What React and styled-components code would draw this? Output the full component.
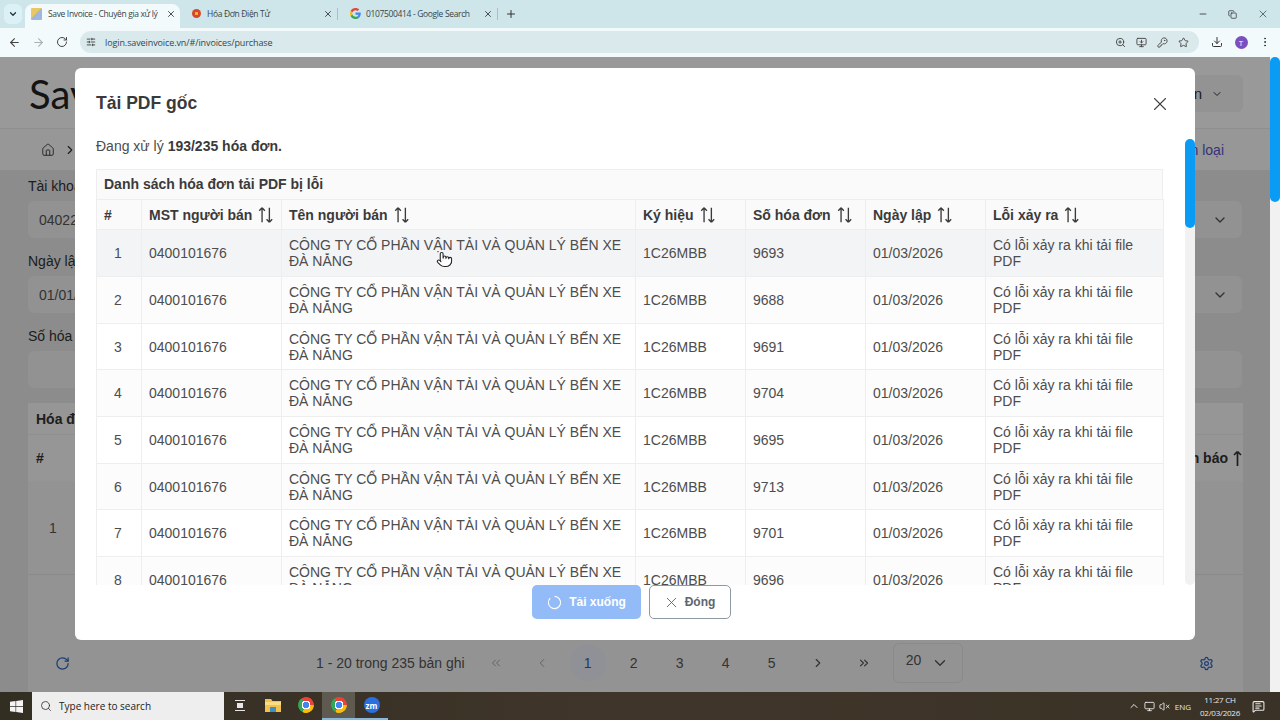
import styled, { createGlobalStyle } from "styled-components";
import {
  ArrowLeft,
  ArrowRight,
  ChevronDown,
  ChevronLeft,
  ChevronRight,
  ChevronsLeft,
  ChevronsRight,
  ChevronUp,
  Download,
  EllipsisVertical,
  Home,
  KeyRound,
  Monitor,
  MonitorDown,
  Plus,
  Pointer,
  RotateCw,
  Search,
  Settings,
  SlidersHorizontal,
  Star,
  VolumeX,
  X,
  ZoomIn,
  MessageSquareText,
  Copy,
  Minus,
} from "lucide-react";

const INVOICE_NUMBERS = [9693, 9688, 9691, 9704, 9695, 9713, 9701, 9696];

const COLUMNS = [
  { label: "#", width: 45 },
  { label: "MST người bán", width: 140, sort: true },
  { label: "Tên người bán", width: 354, sort: true },
  { label: "Ký hiệu", width: 110, sort: true },
  { label: "Số hóa đơn", width: 120, sort: true },
  { label: "Ngày lập", width: 120, sort: true },
  { label: "Lỗi xảy ra", width: 178, sort: true },
];

const GlobalStyle = createGlobalStyle`
  html, body {
    margin: 0;
    padding: 0;
    width: 1280px;
    height: 720px;
    overflow: hidden;
    font-family: "Liberation Sans", Arial, sans-serif;
  }
  * {
    box-sizing: border-box;
  }
`;

function SortIcon() {
  return (
    <SortSvg viewBox="0 0 16 16">
      <path d="M4.500 14.500V1.500M4.500 1.500L2 4.200M4.500 1.500L7 4.200M11 1.500V14.500M11 14.500L8.500 11.800M11 14.500L13.500 11.800" />
    </SortSvg>
  );
}

function GoogleLogo() {
  return (
    <svg width="11" height="11" viewBox="0 0 48 48">
      <path fill="#EA4335" d="M24 9.500c3.500 0 6.700 1.200 9.200 3.600l6.900-6.900C35.900 2.400 30.500 0 24 0 14.600 0 6.500 5.400 2.600 13.200l8 6.200C12.500 13.600 17.800 9.500 24 9.500z" />
      <path fill="#4285F4" d="M46.900 24.500c0-1.600-.1-3.100-.4-4.500H24v9h12.900c-.6 3-2.200 5.500-4.700 7.200l7.700 6c4.500-4.200 7-10.300 7-17.700z" />
      <path fill="#FBBC05" d="M10.500 28.600c-.5-1.400-.8-3-.8-4.600s.3-3.200.8-4.600l-8-6.200C.9 16.400 0 20.100 0 24s.9 7.600 2.600 10.800l7.900-6.200z" />
      <path fill="#34A853" d="M24 48c6.500 0 11.900-2.100 15.900-5.800l-7.700-6c-2.200 1.400-4.900 2.300-8.200 2.300-6.200 0-11.500-4.200-13.400-9.800l-8 6.200C6.500 42.600 14.600 48 24 48z" />
    </svg>
  );
}

function WindowsLogo() {
  return (
    <svg width="13" height="13" viewBox="0 0 16 16" fill="#f4f4f4">
      <path d="M0 2.300 6.800 1.300v6.200H0zM7.600 1.200 16 0v7.500H7.600zM0 8.300h6.800v6.400L0 13.700zM7.600 8.300H16V16l-8.400-1.200z" />
    </svg>
  );
}

function FolderLogo() {
  return (
    <svg width="16" height="14" viewBox="0 0 16 14">
      <path fill="#f2c14e" d="M0 1h6l1.500 2H16v11H0z" />
      <path fill="#f9dc84" d="M0 4h16v3H0z" />
      <path fill="#3f8fc4" d="M5 9h6v5H5z" />
    </svg>
  );
}

function SpinnerIcon() {
  return (
    <svg width="15" height="15" viewBox="0 0 16 16" fill="none" stroke="#fff" strokeWidth="1.200">
      <path d="M8 1.500a6.500 6.500 0 1 1-4.600 1.900" />
    </svg>
  );
}

function LongArrowUp() {
  return (
    <svg width="11" height="16" viewBox="0 0 11 16" fill="none" stroke="#333" strokeWidth="1.700">
      <path d="M5.500 16V1.500M5.500 1.500L2 5M5.500 1.500L9 5" />
    </svg>
  );
}

function BrowserTab({ active, icon, title, width }) {
  return (
    <TabItem $active={active} $width={width}>
      {icon}
      <TabTitle>{title}</TabTitle>
      <X size={10} strokeWidth={2.2} color="#3c4043" />
    </TabItem>
  );
}

function BrowserChrome() {
  return (
    <>
      <TabStrip>
        <TabMenu>
          <ChevronDown size={10} strokeWidth={3} color="#22343a" />
        </TabMenu>
        <BrowserTab active width={155} icon={<InvoiceFavicon />} title="Save Invoice - Chuyên gia xử lý" />
        <BrowserTab width={157} icon={<RedFavicon />} title="Hóa Đơn Điện Tử" />
        <TabDivider />
        <BrowserTab width={159} icon={<GoogleLogo />} title="0107500414 - Google Search" />
        <TabDivider />
        <NewTab>
          <Plus size={12} strokeWidth={2} color="#333" />
        </NewTab>
        <WindowButtons>
          <Minus size={10} color="#333" />
          <Copy size={9} color="#333" />
          <X size={12} strokeWidth={1.4} color="#333" />
        </WindowButtons>
      </TabStrip>
      <Toolbar>
        <NavIcons>
          <ArrowLeft size={13} color="#444" />
          <ArrowRight size={13} color="#aab4b6" />
          <RotateCw size={12} color="#444" />
        </NavIcons>
        <Omnibox>
          <SlidersHorizontal size={10} color="#333" />
          <UrlText>login.saveinvoice.vn/#/invoices/purchase</UrlText>
          <OmniActions>
            <ZoomIn size={11} color="#444" />
            <MonitorDown size={11} color="#444" />
            <KeyRound size={11} color="#444" />
            <Star size={11} color="#444" />
          </OmniActions>
        </Omnibox>
        <ToolbarRight>
          <Download size={12} color="#333" />
          <Avatar>T</Avatar>
          <EllipsisVertical size={12} color="#333" />
        </ToolbarRight>
      </Toolbar>
    </>
  );
}

function BackgroundPage() {
  return (
    <>
      <PageHeader>
        <Logo>Save Invoice</Logo>
        <AccountBox>
          Tài khoản <ChevronDown size={12} />
        </AccountBox>
      </PageHeader>
      <Breadcrumb>
        <Crumbs>
          <Home size={14} strokeWidth={1.5} />
          <ChevronRight size={14} />
          <span>Hóa đơn mua vào</span>
        </Crumbs>
        <CrumbLink>Phân loại</CrumbLink>
      </Breadcrumb>
      <FilterForm>
        <FieldLabel>Tài khoản</FieldLabel>
        <FieldBox>
          04022 <ChevronDown size={16} />
        </FieldBox>
        <FieldLabel>Ngày lập</FieldLabel>
        <FieldBox>
          01/01/2026 <ChevronDown size={16} />
        </FieldBox>
        <FieldLabel>Số hóa đơn</FieldLabel>
        <FieldBox />
      </FilterForm>
      <BackPanel>
        <BackTitle>Hóa đơn</BackTitle>
        <BackHeadRow>
          <span>#</span>
          <BackHeadEnd>
            Cảnh báo <LongArrowUp />
          </BackHeadEnd>
        </BackHeadRow>
        <BackRow>1</BackRow>
      </BackPanel>
      <Pagination>
        <RotateCw size={15} color="#2f66c0" />
        <PageSummary>1 - 20 trong 235 bản ghi</PageSummary>
        <PageButton $dim>
          <ChevronsLeft size={14} strokeWidth={1.5} />
        </PageButton>
        <PageButton $dim>
          <ChevronLeft size={14} strokeWidth={1.5} />
        </PageButton>
        <PageButton $current>1</PageButton>
        <PageButton>2</PageButton>
        <PageButton>3</PageButton>
        <PageButton>4</PageButton>
        <PageButton>5</PageButton>
        <PageButton>
          <ChevronRight size={14} />
        </PageButton>
        <PageButton>
          <ChevronsRight size={14} />
        </PageButton>
        <PageSize>
          <PageSizeValue>20</PageSizeValue>
          <ChevronDown size={18} strokeWidth={1.8} />
        </PageSize>
        <GearWrap>
          <Settings size={15} color="#2f66c0" />
        </GearWrap>
      </Pagination>
    </>
  );
}

function DownloadModal() {
  return (
    <Modal>
      <ModalHeader>
        <ModalTitle>Tải PDF gốc</ModalTitle>
        <X size={22} strokeWidth={1.2} color="#444" />
      </ModalHeader>
      <ModalMiddle>
        <ModalBody>
          <Progress>
            Đang xử lý <b>193/235 hóa đơn.</b>
          </Progress>
          <TableCaption>Danh sách hóa đơn tải PDF bị lỗi</TableCaption>
          <ErrorTable>
            <colgroup>
              {COLUMNS.map((c) => (
                <col key={c.label} width={c.width} />
              ))}
            </colgroup>
            <thead>
              <tr>
                {COLUMNS.map((c) => (
                  <HeadCell key={c.label}>
                    <HeadInner>
                      {c.label}
                      {c.sort && <SortIcon />}
                    </HeadInner>
                  </HeadCell>
                ))}
              </tr>
            </thead>
            <tbody>
              {INVOICE_NUMBERS.map((no, i) => (
                <BodyRow key={no} $hover={i === 0}>
                  <IndexCell>{i + 1}</IndexCell>
                  <BodyCell>0400101676</BodyCell>
                  <BodyCell>CÔNG TY CỔ PHẦN VẬN TẢI VÀ QUẢN LÝ BẾN XE ĐÀ NẴNG</BodyCell>
                  <BodyCell>1C26MBB</BodyCell>
                  <BodyCell>{no}</BodyCell>
                  <BodyCell>01/03/2026</BodyCell>
                  <BodyCell>Có lỗi xảy ra khi tải file PDF</BodyCell>
                </BodyRow>
              ))}
            </tbody>
          </ErrorTable>
        </ModalBody>
        <ScrollRail>
          <ScrollThumb />
        </ScrollRail>
      </ModalMiddle>
      <ModalFooter>
        <PrimaryButton>
          <SpinnerIcon />
          Tải xuống
        </PrimaryButton>
        <GhostButton>
          <X size={17} strokeWidth={1.3} />
          Đóng
        </GhostButton>
      </ModalFooter>
    </Modal>
  );
}

export default function App() {
  return (
    <Screen>
      <GlobalStyle />
      <BrowserChrome />
      <Viewport>
        <PageArea>
          <BackgroundPage />
          <Overlay>
            <DownloadModal />
          </Overlay>
          <HandCursor>
            <Pointer size={17} strokeWidth={1.5} color="#222" fill="#fff" />
          </HandCursor>
        </PageArea>
        <PageScrollbar>
          <PageThumb />
        </PageScrollbar>
      </Viewport>
      <Taskbar>
        <StartButton>
          <WindowsLogo />
        </StartButton>
        <SearchBox>
          <Search size={12} strokeWidth={1.5} color="#222" />
          Type here to search
        </SearchBox>
        <TaskIcons>
          <TaskIcon>
            <TaskView />
          </TaskIcon>
          <TaskIcon>
            <FolderLogo />
          </TaskIcon>
          <TaskIcon>
            <ChromeDot />
          </TaskIcon>
          <TaskIcon $active>
            <ChromeDot />
          </TaskIcon>
          <TaskIcon $running>
            <ZoomDot>zm</ZoomDot>
          </TaskIcon>
        </TaskIcons>
        <Tray>
          <ChevronUp size={12} />
          <Monitor size={11} />
          <VolumeX size={11} />
          <TrayLang>ENG</TrayLang>
          <Clock>
            <span>11:27 CH</span>
            <span>02/03/2026</span>
          </Clock>
          <MessageSquareText size={13} />
        </Tray>
      </Taskbar>
    </Screen>
  );
}

const Screen = styled.div`
  width: 1280px;
  height: 720px;
  display: flex;
  flex-direction: column;
  overflow: hidden;
`;

/* browser chrome */
const TabStrip = styled.div`
  height: 28px;
  flex: none;
  background: #cee6ea;
  display: flex;
  align-items: flex-end;
  padding-left: 4px;
`;

const TabMenu = styled.div`
  width: 18px;
  height: 20px;
  margin: 0 3px 4px 0;
  border-radius: 6px;
  background: #dcf1f5;
  display: flex;
  align-items: center;
  justify-content: center;
`;

const TabItem = styled.div`
  width: ${(p) => p.$width}px;
  height: 24px;
  flex: none;
  display: flex;
  align-items: center;
  gap: 5px;
  padding: 0 4px 5px ${(p) => (p.$active ? 6 : 12)}px;
  border-radius: 8px 8px 0 0;
  background: ${(p) => (p.$active ? "#f3fafb" : "transparent")};
`;

const TabTitle = styled.span`
  flex: 1;
  font: 8.5px "Open Sans", sans-serif;
  letter-spacing: -0.35px;
  color: #3a4548;
  white-space: nowrap;
`;

const TabDivider = styled.div`
  width: 1px;
  height: 12px;
  margin: 0 0 8px;
  background: #9fc4ca;
`;

const NewTab = styled.div`
  width: 26px;
  height: 24px;
  padding-bottom: 5px;
  display: flex;
  align-items: center;
  justify-content: center;
`;

const WindowButtons = styled.div`
  margin-left: auto;
  width: 90px;
  height: 28px;
  display: flex;
  align-items: center;
  justify-content: space-between;
  padding: 0 11px 0 8px;
  align-self: flex-start;
`;

const InvoiceFavicon = styled.span`
  width: 11px;
  height: 12px;
  flex: none;
  margin-right: 1px;
  border-radius: 1px;
  background: linear-gradient(135deg, #e9c765 0 45%, #9fb7dc 45% 100%);
`;

const RedFavicon = styled.span`
  width: 9px;
  height: 9px;
  flex: none;
  margin-right: 1px;
  border-radius: 50%;
  background: radial-gradient(circle, #f2b23a 0 25%, #d9472b 30%);
`;

const Toolbar = styled.div`
  height: 29px;
  flex: none;
  background: #f3fafb;
  display: flex;
  align-items: center;
  padding: 0 8px 1px;
`;

const NavIcons = styled.div`
  width: 72px;
  padding-right: 12px;
  display: flex;
  justify-content: space-between;
`;

const Omnibox = styled.div`
  width: 1119px;
  height: 22px;
  border-radius: 11px;
  background: #dae9ec;
  display: flex;
  align-items: center;
  gap: 9px;
  padding: 0 10px 0 6px;
`;

const UrlText = styled.span`
  font: 9px "Open Sans", sans-serif;
  letter-spacing: -0.1px;
  color: #33474c;
`;

const OmniActions = styled.div`
  margin-left: auto;
  display: flex;
  gap: 10px;
`;

const ToolbarRight = styled.div`
  flex: 1;
  display: flex;
  align-items: center;
  justify-content: space-between;
  padding: 0 1px 0 12px;
`;

const Avatar = styled.div`
  width: 13px;
  height: 13px;
  border-radius: 50%;
  background: #7a4fc0;
  color: #fff;
  font: 8px "Open Sans", sans-serif;
  display: flex;
  align-items: center;
  justify-content: center;
`;

/* page under the dialog */
const Viewport = styled.div`
  flex: 1;
  min-height: 0;
  display: flex;
`;

const PageArea = styled.div`
  position: relative;
  width: 1270px;
  overflow: hidden;
  background: #e9e9e9;
  display: flex;
  flex-direction: column;
  color: #333;
  font-size: 14px;
`;

const PageScrollbar = styled.div`
  width: 10px;
  background: #f1f1f1;
`;

const PageThumb = styled.div`
  height: 145px;
  border-radius: 5px;
  background: #0a9cf5;
`;

const PageHeader = styled.div`
  height: 71px;
  flex: none;
  background: #fff;
  display: flex;
  align-items: center;
  justify-content: space-between;
  padding: 2px 27px 0 29px;
`;

const Logo = styled.div`
  font: 40px Lato, sans-serif;
  color: #222;
`;

const AccountBox = styled.div`
  width: 120px;
  height: 37px;
  border-radius: 6px;
  background: #f5f5f5;
  font-size: 15px;
  white-space: nowrap;
  display: flex;
  align-items: center;
  justify-content: flex-end;
  gap: 9px;
  padding-right: 20px;
`;

const Breadcrumb = styled.div`
  height: 42px;
  flex: none;
  background: #fcfcfc;
  border-top: 1px solid #eee;
  display: flex;
  align-items: center;
  justify-content: space-between;
  padding: 0 46px 0 41px;
`;

const Crumbs = styled.div`
  display: flex;
  align-items: center;
  gap: 8px;
`;

const CrumbLink = styled.span`
  color: #5a55c8;
`;

const FilterForm = styled.div`
  flex: none;
  display: flex;
  flex-direction: column;
  padding: 4px 28px 0;
`;

const FieldLabel = styled.label`
  height: 24px;
  margin-bottom: 3px;
  display: flex;
  align-items: center;
`;

const FieldBox = styled.div`
  height: 37px;
  margin-bottom: 11px;
  border-radius: 6px;
  background: #f3f3f3;
  color: #555;
  display: flex;
  align-items: center;
  justify-content: space-between;
  padding: 0 14px 0 11px;
`;

const BackPanel = styled.div`
  flex: 1;
  min-height: 0;
  margin: 4px 27px 0 28px;
  background: #f6f6f6;
  display: flex;
  flex-direction: column;
`;

const BackTitle = styled.div`
  height: 32px;
  flex: none;
  padding-left: 8px;
  font-weight: 700;
  display: flex;
  align-items: center;
  background: #fafafa;
  border-bottom: 1px solid #eee;
`;

const BackHeadRow = styled.div`
  height: 46px;
  flex: none;
  padding: 0 0 0 8px;
  font-weight: 700;
  display: flex;
  align-items: center;
  justify-content: space-between;
  background: #fafafa;
`;

const BackHeadEnd = styled.div`
  display: flex;
  align-items: center;
  gap: 4px;
`;

const BackRow = styled.div`
  height: 94px;
  flex: none;
  display: flex;
  align-items: center;
  padding-left: 21px;
  color: #555;
  border-bottom: 1px solid #e6e6e6;
`;

const Pagination = styled.div`
  height: 52px;
  flex: none;
  display: flex;
  align-items: center;
  background: #f6f6f6;
  margin: 0 27px 0 28px;
  padding: 0 0 6px 27px;
`;

const PageSummary = styled.span`
  margin: 0 8px 0 246px;
  color: #555;
`;

const PageButton = styled.div`
  width: 46px;
  height: 38px;
  flex: none;
  display: flex;
  align-items: center;
  justify-content: center;
  color: ${(p) => (p.$current ? "#3b5bc0" : p.$dim ? "#999" : "#555")};
  background: ${(p) =>
    p.$current ? "radial-gradient(circle 19px, #eef2fb 97%, transparent)" : "transparent"};
`;

const PageSize = styled.div`
  width: 70px;
  height: 40px;
  flex: none;
  margin-left: 6px;
  border: 1px solid #e6e6e6;
  border-radius: 6px;
  padding: 0 13px 0 12px;
  color: #555;
  display: flex;
  align-items: center;
  justify-content: space-between;
`;

const PageSizeValue = styled.span`
  margin-bottom: 6px;
`;

const GearWrap = styled.div`
  margin-left: auto;
  padding-right: 29px;
  display: flex;
`;

/* dialog */
const Overlay = styled.div`
  position: absolute;
  inset: 0;
  background: rgba(0, 0, 0, 0.4);
  padding: 11px 75px 52px;
  display: flex;
`;

const Modal = styled.div`
  flex: 1;
  min-width: 0;
  background: #fff;
  border-radius: 6px;
  overflow: hidden;
  display: flex;
  flex-direction: column;
`;

const ModalHeader = styled.div`
  height: 71px;
  flex: none;
  display: flex;
  align-items: center;
  justify-content: space-between;
  padding: 0 24px 0 21px;
`;

const ModalTitle = styled.h2`
  margin: 0;
  font-size: 17.5px;
  font-weight: 700;
  color: #3a3a3a;
`;

const ModalMiddle = styled.div`
  flex: 1;
  min-height: 0;
  display: flex;
`;

const ModalBody = styled.div`
  flex: 1;
  min-width: 0;
  overflow: hidden;
  padding: 0 22px 0 21px;
  color: #4d4d4d;
`;

const ScrollRail = styled.div`
  width: 10px;
  flex: none;
  border-radius: 5px;
  background: #f1f1f1;
`;

const ScrollThumb = styled.div`
  height: 89px;
  border-radius: 5px;
  background: #0a9cf5;
`;

const Progress = styled.p`
  margin: 0 0 15px;
  height: 15px;
  line-height: 15px;
  font-size: 14px;
  color: #4d4d4d;

  b {
    color: #3a3a3a;
  }
`;

const TableCaption = styled.div`
  height: 30.4px;
  padding: 0 7px 2px;
  display: flex;
  align-items: center;
  font-size: 14px;
  font-weight: 700;
  color: #3a3a3a;
  background: #fafafa;
  border: 1px solid #eeeeee;
  border-bottom: 0;
`;

const ErrorTable = styled.table`
  width: 1067px;
  table-layout: fixed;
  border-collapse: collapse;
  font-size: 14px;
`;

const HeadCell = styled.th`
  height: 30px;
  padding: 0 7px;
  text-align: left;
  font-weight: 700;
  color: #3a3a3a;
  background: #fafafa;
  border: 1px solid #eeeeee;
`;

const HeadInner = styled.div`
  display: flex;
  align-items: center;
  height: 18px;
  gap: 5px;
  white-space: nowrap;
`;

const SortSvg = styled.svg`
  width: 18px;
  height: 18px;
  flex: none;
  fill: none;
  stroke: #3a3a3a;
  stroke-width: 1.2;
`;

const BodyRow = styled.tr`
  height: 46.67px;
  background: ${(p) => (p.$hover ? "#f3f4f5" : "#fff")};

  &:nth-child(even) {
    background: #fcfcfc;
  }
`;

const BodyCell = styled.td`
  padding: 0 7px;
  line-height: 16px;
  border-right: 1px solid #eeeeee;
  border-bottom: 1px solid #eeeeee;

  &:last-child {
    padding-right: 20px;
  }
`;

const IndexCell = styled(BodyCell)`
  padding-right: 9px;
  text-align: center;
  border-left: 1px solid #eeeeee;
`;

const ModalFooter = styled.div`
  height: 55px;
  flex: none;
  display: flex;
  justify-content: center;
  gap: 8px;
  padding-right: 7px;
`;

const PrimaryButton = styled.button`
  width: 109px;
  height: 34px;
  border: 0;
  border-radius: 5px;
  background: #93bbf7;
  color: #fff;
  font: 700 12px "Liberation Sans", sans-serif;
  display: flex;
  align-items: center;
  justify-content: center;
  gap: 7px;
`;

const GhostButton = styled.button`
  width: 82px;
  height: 34px;
  border: 1px solid #8d9aa3;
  border-radius: 5px;
  padding: 0 8px 0 6px;
  background: #fff;
  color: #5b6670;
  font: 700 12px "Liberation Sans", sans-serif;
  display: flex;
  align-items: center;
  justify-content: center;
  gap: 5px;
`;

const HandCursor = styled.div`
  position: absolute;
  left: 436px;
  top: 194px;
  display: flex;
`;

/* windows taskbar */
const Taskbar = styled.div`
  height: 28px;
  flex: none;
  background: linear-gradient(90deg, #332e22, #40352a 50%, #3a3226);
  display: flex;
  align-items: center;
`;

const StartButton = styled.div`
  width: 32px;
  display: flex;
  justify-content: center;
`;

const SearchBox = styled.div`
  width: 192px;
  height: 28px;
  background: #eeeeee;
  display: flex;
  align-items: center;
  gap: 7px;
  padding-left: 8px;
  font: 10px "Open Sans", sans-serif;
  color: #222;
`;

const TaskIcons = styled.div`
  display: flex;
  margin-left: -1px;
`;

const TaskIcon = styled.div`
  width: 33px;
  height: 28px;
  display: flex;
  align-items: center;
  justify-content: center;
  background: ${(p) => (p.$active ? "#5f5a50" : "transparent")};
  border-bottom: 2px solid ${(p) => (p.$active || p.$running ? "#8bb8d8" : "transparent")};
`;

const TaskView = styled.span`
  width: 10px;
  height: 11px;
  border: 1.500px solid #e6e6e6;
  border-width: 1.500px 0;
  box-shadow: inset 0 0 0 2px #3a3226, inset 0 0 0 6px #e6e6e6;
`;

const ChromeDot = styled.span`
  width: 16px;
  height: 16px;
  border-radius: 50%;
  background:
    radial-gradient(circle, #4285f4 0 27%, #fff 29% 38%, transparent 40%),
    conic-gradient(#ea4335 0 33%, #fbbc05 33% 66%, #34a853 66%);
  transform: rotate(-30deg);
`;

const ZoomDot = styled.span`
  width: 16px;
  height: 16px;
  border-radius: 50%;
  background: #2a6fe0;
  color: #fff;
  font: 700 8px "Open Sans", sans-serif;
  display: flex;
  align-items: center;
  justify-content: center;
`;

const Tray = styled.div`
  margin-left: auto;
  display: flex;
  align-items: center;
  gap: 4px;
  padding-right: 15px;
  color: #e8e8e8;
  font: 8px "Open Sans", sans-serif;
`;

const TrayLang = styled.span`
  margin: 0 5px 0 1px;
`;

const Clock = styled.div`
  display: flex;
  flex-direction: column;
  align-items: center;
  gap: 2px;
  letter-spacing: -0.25px;
  margin-right: 8px;
`;
